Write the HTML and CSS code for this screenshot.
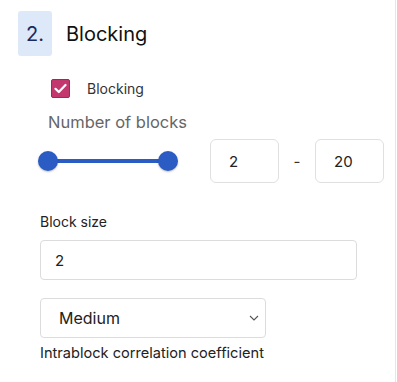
FILE: index.html
```html
<!DOCTYPE html>
<html>
<head>
<meta charset="utf-8">
<link rel="stylesheet" href="styles.css">
</head>
<body>
<div class="panel">
  <div class="head">
    <div class="badge">2.</div>
    <h2 class="title">Blocking</h2>
  </div>
  <label class="check-row">
    <span class="checkbox">
      <svg width="13" height="11" viewBox="0 0 13 11"><path d="M1.5 5.8 L4.8 9 L11.5 2" fill="none" stroke="#fff" stroke-width="2.2" stroke-linecap="round" stroke-linejoin="round"/></svg>
    </span>
    <span class="check-label">Blocking</span>
  </label>
  <div class="sub">Number of blocks</div>
  <div class="range-row">
    <div class="slider">
      <div class="track"></div>
      <div class="thumb"></div>
      <div class="thumb"></div>
    </div>
    <div class="num">2</div>
    <div class="dash">-</div>
    <div class="num">20</div>
  </div>
  <div class="field">
    <div class="label">Block size</div>
    <div class="text-input">2</div>
  </div>
  <div class="select">
    <span>Medium</span>
    <svg width="10" height="6" viewBox="0 0 10 6"><path d="M1 1 L5 5 L9 1" fill="none" stroke="#555" stroke-width="1.1"/></svg>
  </div>
  <div class="caption">Intrablock correlation coefficient</div>
</div>
</body>
</html>
```
FILE: styles.css
```css
html, body { margin: 0; padding: 0; background: #fff; }
body { font-family: "Inter", "Noto Sans", sans-serif; color: #222; }
.panel {
  width: 396px;
  height: 382px;
  border-right: 1px solid #e6e6e6;
  box-sizing: border-box;
  padding-top: 11px;
}
.head { display: flex; align-items: center; margin-left: 18px; }
.badge {
  width: 34px; height: 45px;
  background: #dde8f8;
  border-radius: 3px;
  display: flex; align-items: center; justify-content: center;
  font-size: 20px; color: #1b2a5c;
}
.title { margin: 0 0 0 14px; font-weight: 400; font-size: 20px; color: #111; }
.check-row { display: flex; align-items: center; margin: 23px 0 0 51px; }
.checkbox {
  width: 19px; height: 19px; box-sizing: border-box;
  background: #c2386e; border: 1px solid #a02858; border-radius: 2px;
  display: flex; align-items: center; justify-content: center;
}
.check-label { margin-left: 17px; font-size: 14px; color: #333; }
.sub { margin: 14px 0 0 48px; font-size: 16.5px; color: #666; }
.range-row { display: flex; align-items: center; margin: 7px 0 0 38px; }
.slider { position: relative; width: 140px; height: 20px; display: flex; justify-content: space-between; }
.track { position: absolute; left: 10px; right: 10px; top: 8px; height: 4px; background: #2a5cc4; }
.thumb { position: relative; width: 20px; height: 20px; border-radius: 50%; background: #2a5cc4; box-shadow: 0 1px 2px rgba(0,0,0,0.25); }
.num {
  width: 69px; height: 44px; box-sizing: border-box;
  border: 1px solid #e0e0e0; border-radius: 6px;
  padding-left: 18px; display: flex; align-items: center;
  font-size: 15px; color: #222;
}
.slider + .num { margin-left: 32px; }
.dash { width: 36px; text-align: center; font-size: 15px; color: #333; }
.field { margin: 30px 0 0 40px; }
.label { font-size: 14px; color: #222; }
.text-input {
  margin-top: 10px; width: 317px; height: 40px; box-sizing: border-box;
  border: 1px solid #dcdcdc; border-radius: 4px;
  padding-left: 14px; display: flex; align-items: center; font-size: 15px;
}
.select {
  margin: 18px 0 0 40px; width: 226px; height: 40px; box-sizing: border-box;
  border: 1px solid #dcdcdc; border-radius: 4px;
  padding: 0 6px 0 18px; display: flex; align-items: center; justify-content: space-between;
  font-size: 16px; color: #222;
}
.caption { margin: 6px 0 0 40px; font-size: 14.6px; color: #222; }
```
